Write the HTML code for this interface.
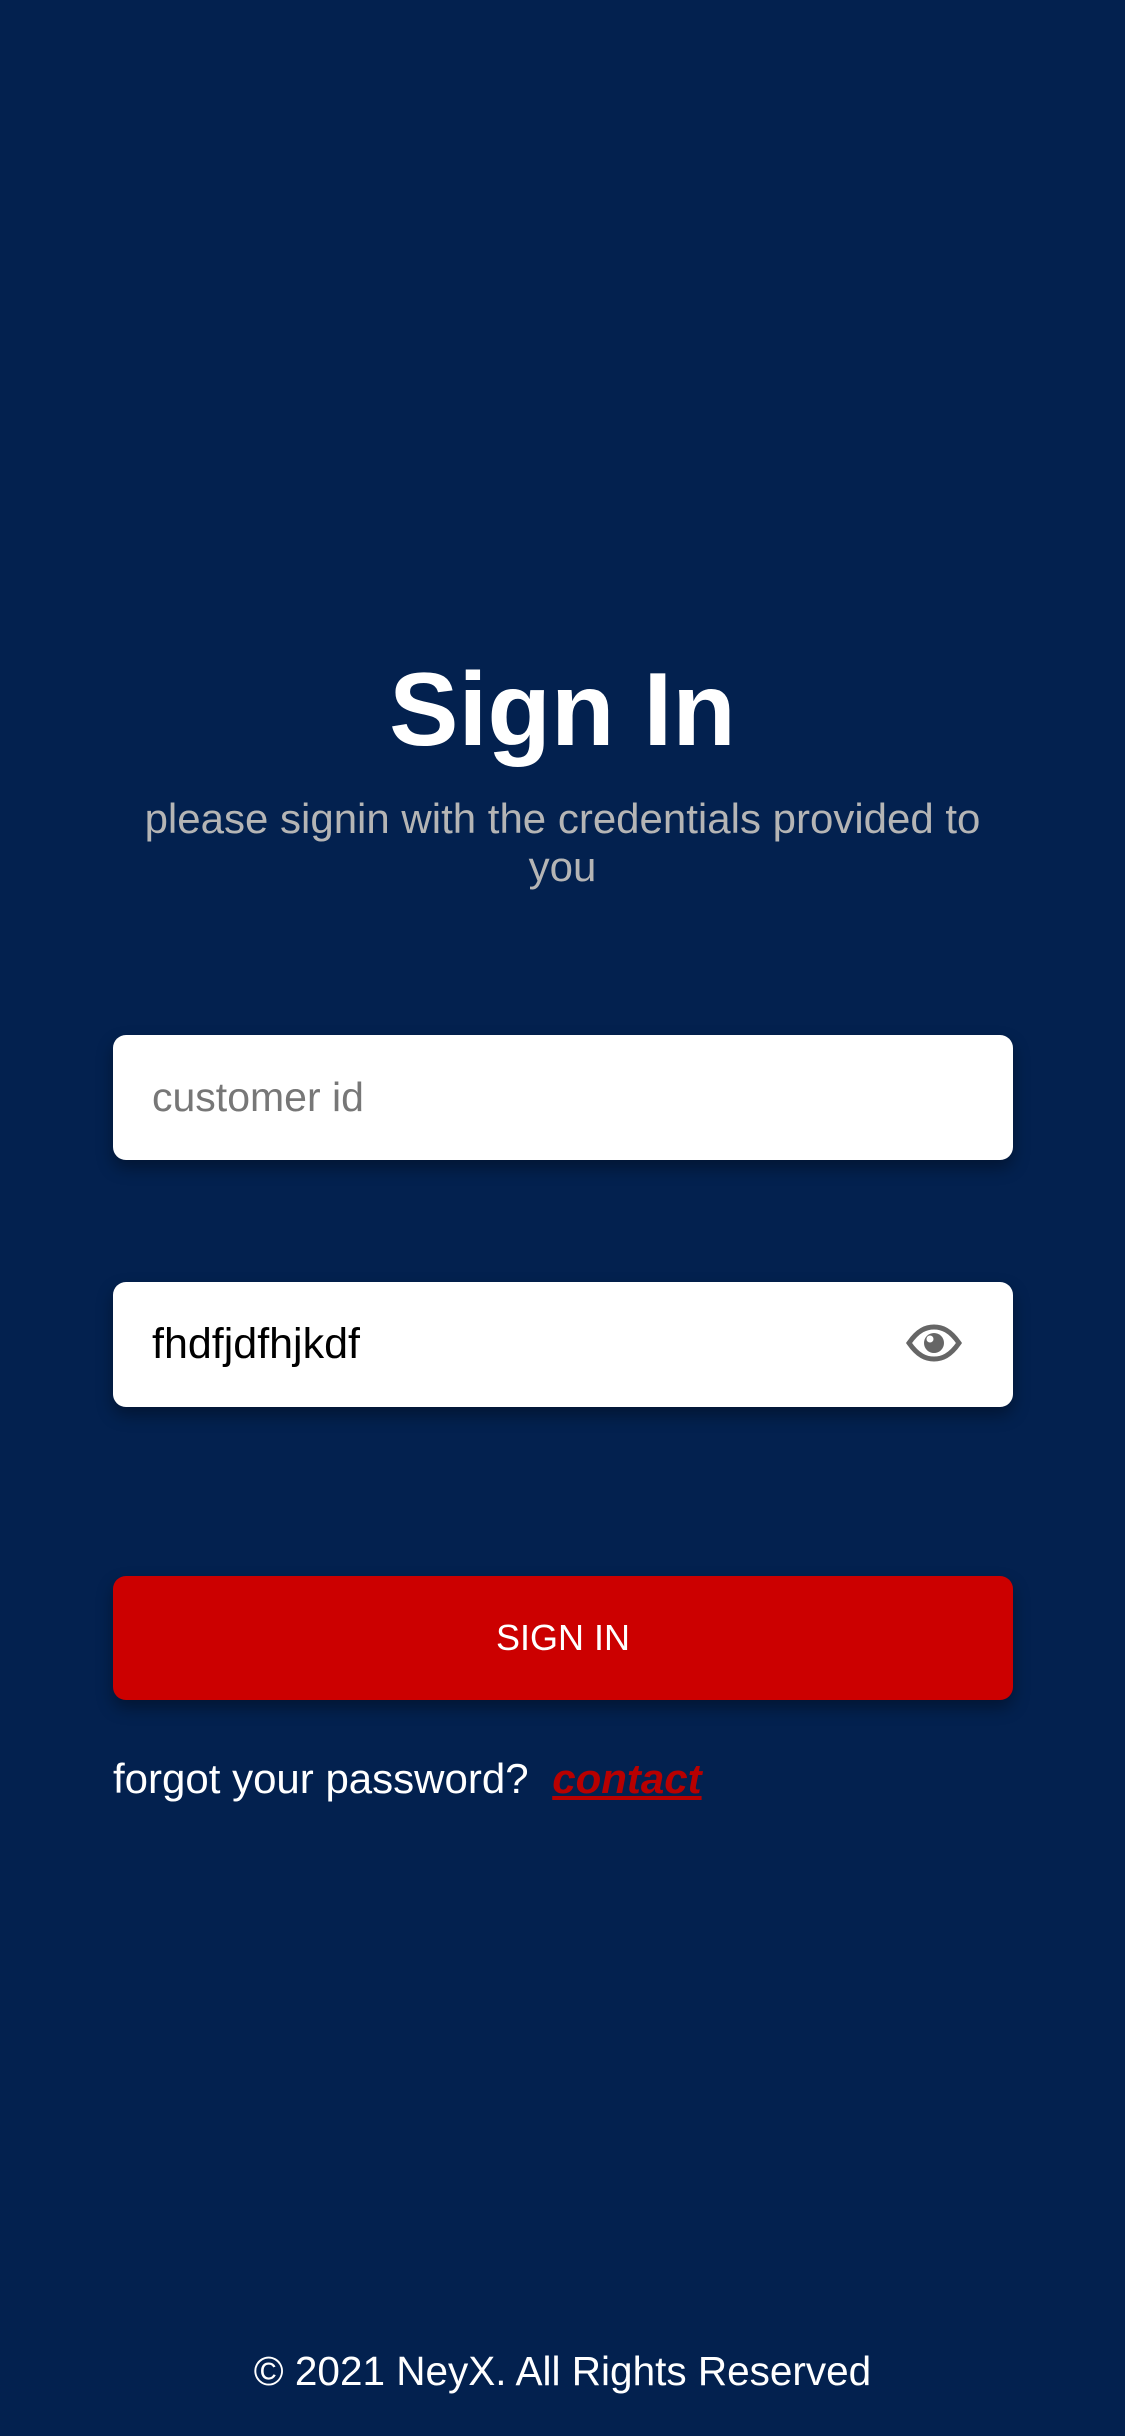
<!DOCTYPE html>
<html><head><meta charset="utf-8"><style>
*{margin:0;padding:0;box-sizing:border-box}
body{width:1125px;height:2436px;background:#03214f;font-family:"Liberation Sans",sans-serif;position:relative;overflow:hidden}
.a{position:absolute}
h1{position:absolute;left:0;width:1125px;top:645px;text-align:center;color:#fff;font-size:104px;font-weight:bold;line-height:130px}
.sub{left:0;width:1125px;top:795px;text-align:center;color:#b5b5b5;font-size:42px;line-height:48px}
.box{left:113px;width:900px;height:125px;background:#fff;border-radius:13px;box-shadow:0 8px 16px rgba(0,0,0,.35)}
.box span{position:absolute;left:39px;top:0;line-height:125px;font-size:41px}
.btn{left:113px;top:1576px;width:900px;height:124px;background:#cc0000;border-radius:13px;box-shadow:0 8px 16px rgba(0,0,0,.35);color:#fff;text-align:center;line-height:124px;font-size:36px}
.fg{left:113px;top:1752px;color:#fff;font-size:42px;line-height:54px}
.fg b{color:#b80000;font-style:italic;text-decoration:underline;margin-left:12px}
.ft{left:0;width:1125px;top:2346px;text-align:center;color:#fff;font-size:40.5px;line-height:50px}
</style></head><body>
<h1>Sign In</h1>
<div class="a sub">please signin with the credentials provided to<br>you</div>
<div class="a box" style="top:1035px"><span style="color:#777">customer id</span></div>
<div class="a box" style="top:1282px"><span style="color:#000;font-size:43px">fhdfjdfhjkdf</span>
<svg class="a" style="left:793px;top:42px" width="56" height="38" viewBox="0 0 56 38"><path d="M3 19 C12 6 20 3 28 3 C36 3 44 6 53 19 C44 32 36 35 28 35 C20 35 12 32 3 19Z" fill="none" stroke="#666" stroke-width="5"/><circle cx="28" cy="19" r="10" fill="#666"/><circle cx="24" cy="15" r="3.5" fill="#fff"/></svg>
</div>
<div class="a btn">SIGN IN</div>
<div class="a fg">forgot your password? <b>contact</b></div>
<div class="a ft">© 2021 NeyX. All Rights Reserved</div>
</body></html>
